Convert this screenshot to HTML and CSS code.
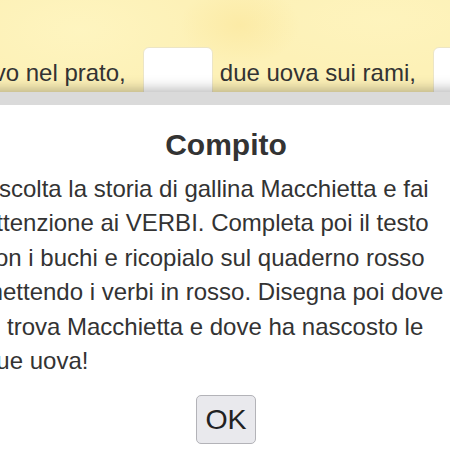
FILE: index.html
```html
<!DOCTYPE html>
<html lang="it">
<head>
<meta charset="utf-8">
<title>Compito</title>
<link rel="stylesheet" href="styles.css">
</head>
<body>
<main class="page">
  <div class="story">
    <span class="story-text">uovo nel prato,</span>
    <input class="blank" type="text" aria-label="verbo 1">
    <span class="story-text">due uova sui rami,</span>
    <input class="blank" type="text" aria-label="verbo 2">
  </div>
</main>
<div class="dialog" role="dialog" aria-labelledby="dlg-title">
  <h2 class="dialog-title" id="dlg-title">Compito</h2>
  <p class="dialog-text">Ascolta la storia di gallina Macchietta e fai attenzione ai VERBI. Completa poi il testo con i buchi e ricopialo sul quaderno rosso mettendo i verbi in rosso. Disegna poi dove si trova Macchietta e dove ha nascosto le due uova!</p>
  <div class="dialog-actions">
    <button class="ok-btn" type="button">OK</button>
  </div>
</div>
</body>
</html>
```

FILE: styles.css
```css
html, body {
  margin: 0;
  padding: 0;
  width: 450px;
  height: 450px;
  overflow: hidden;
}

body {
  position: relative;
  font-family: "Liberation Sans", Arial, sans-serif;
  color: #333;
  background-color: #fdf1b7;
  background-image:
    radial-gradient(ellipse 60px 40px at 240px 25px, rgba(250, 225, 140, 0.4), rgba(250, 225, 140, 0) 100%),
    radial-gradient(ellipse 120px 60px at 80px 30px, rgba(255, 248, 200, 0.5), rgba(255, 248, 200, 0) 100%),
    radial-gradient(ellipse 140px 50px at 380px 20px, rgba(255, 246, 195, 0.5), rgba(255, 246, 195, 0) 100%);
}

.page {
  height: 450px;
}

.story {
  display: flex;
  align-items: center;
  padding-top: 47px;
  margin-left: -33px;
  white-space: nowrap;
  font-size: 24px;
  color: #333;
}

.story-text {
  flex: none;
}

.blank {
  flex: none;
  box-sizing: border-box;
  width: 70px;
  height: 52px;
  margin: 0 7px 0 17px;
  padding: 0;
  border: 1px solid #ece5c6;
  border-radius: 6px;
  background: #fff;
  font: inherit;
}

.dialog {
  position: absolute;
  top: 92px;
  bottom: 0;
  left: -28px;
  width: 508px;
  box-sizing: border-box;
  border-top: 13px solid #dadada;
  background: #fff;
  padding: 23px 11px 0;
  box-shadow: 0 -3px 12px rgba(0, 0, 0, 0.28);
}

.dialog-title {
  margin: 0 0 9px;
  font-size: 30px;
  line-height: 34.5px;
  font-weight: bold;
  text-align: center;
  color: #333;
}

.dialog-text {
  max-width: 474px;
  margin: 0;
  font-size: 24px;
  line-height: 34.6px;
  color: #333;
}

.dialog-actions {
  margin-top: 16px;
  text-align: center;
}

.ok-btn {
  box-sizing: border-box;
  height: 49px;
  padding: 0 8px;
  border: 1px solid #b3b3b8;
  border-radius: 5px;
  background: #e9e9ed;
  color: #222;
  font-family: "Liberation Sans", Arial, sans-serif;
  font-size: 28.5px;
  line-height: 31px;
}
```
